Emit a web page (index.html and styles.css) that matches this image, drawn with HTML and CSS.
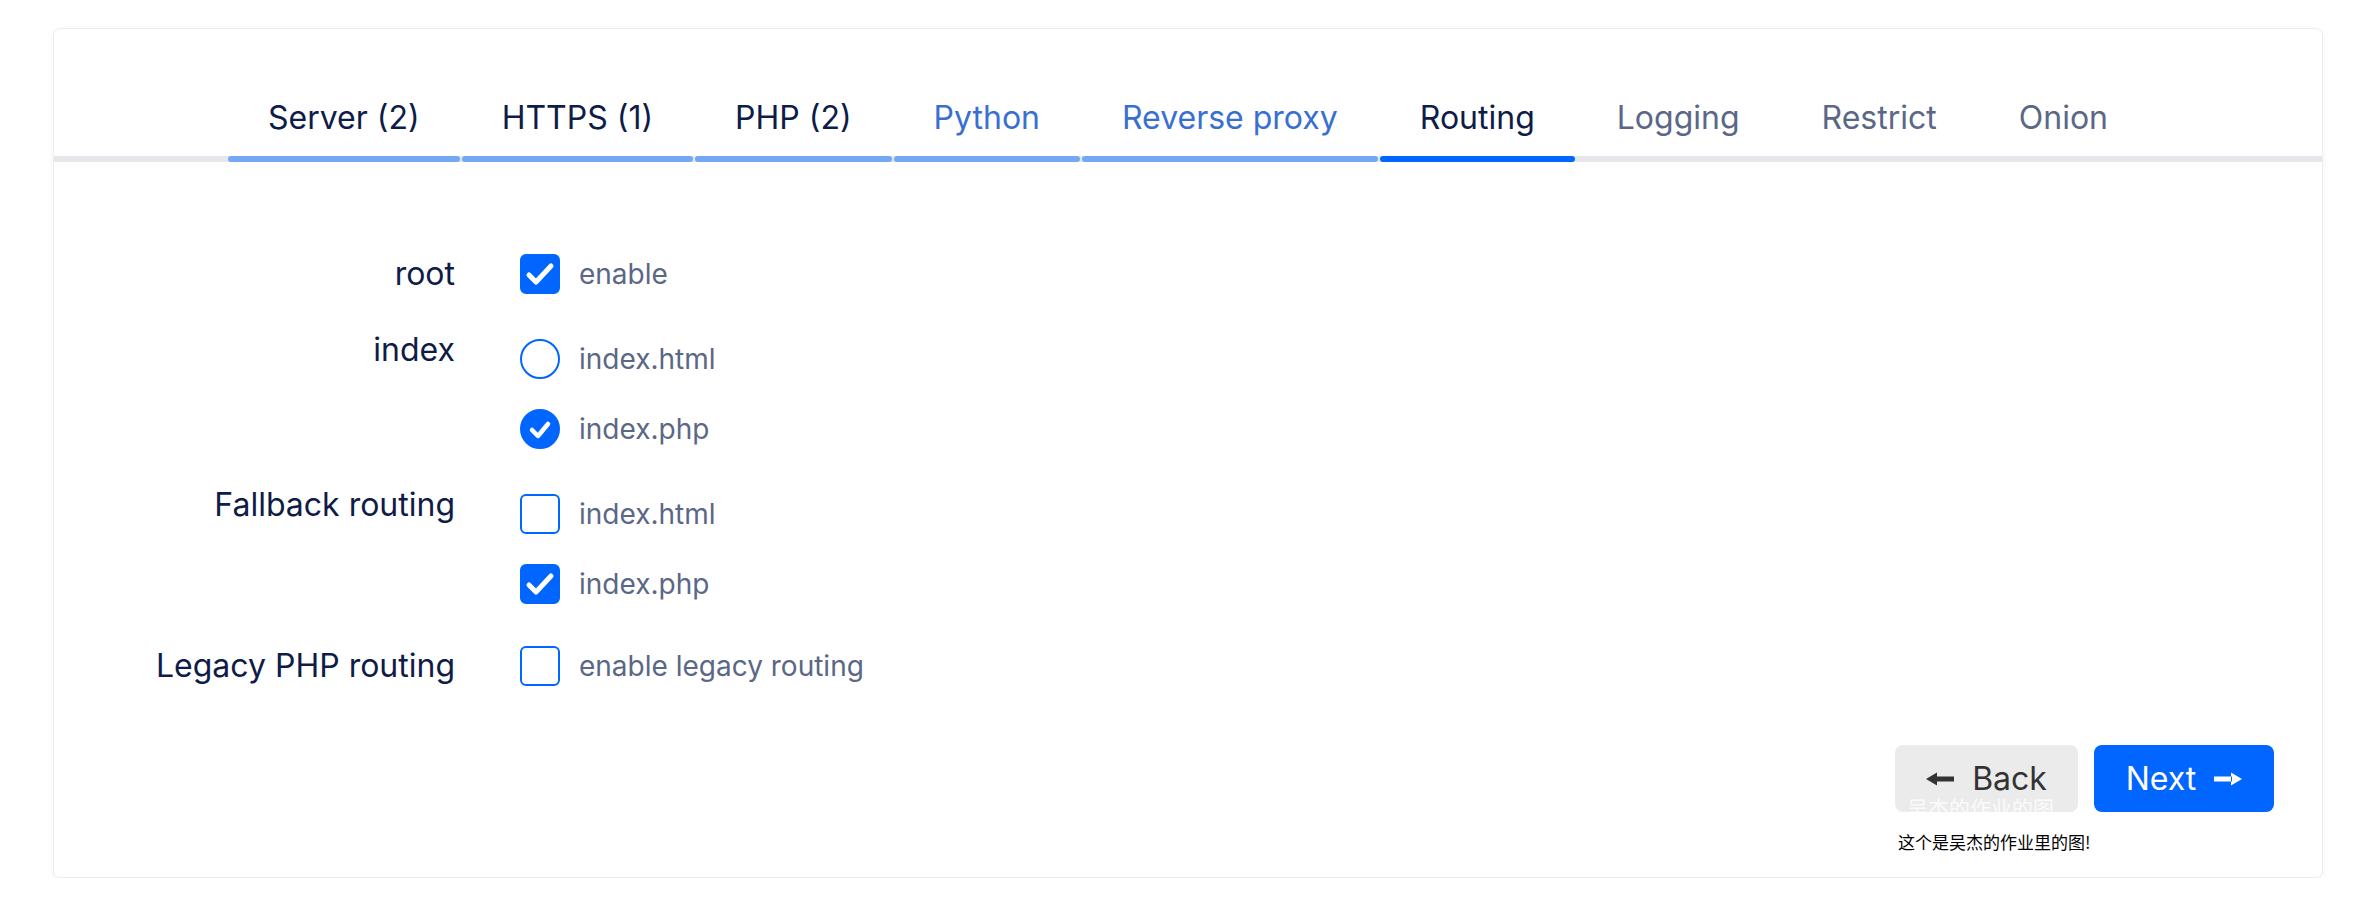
FILE: index.html
```html
<!DOCTYPE html>
<html lang="en">
<head>
<meta charset="utf-8">
<title>Routing</title>
<link rel="stylesheet" href="styles.css">
</head>
<body>
<div class="page">
  <div class="card">
    <nav class="steps">
      <div class="step done">Server (2)</div>
      <div class="step done">HTTPS (1)</div>
      <div class="step done">PHP (2)</div>
      <div class="step link">Python</div>
      <div class="step link">Reverse proxy</div>
      <div class="step active">Routing</div>
      <div class="step todo">Logging</div>
      <div class="step todo">Restrict</div>
      <div class="step todo">Onion</div>
    </nav>

    <div class="form">
      <div class="row">
        <div class="label">root</div>
        <div class="opts">
          <div class="opt">
            <span class="box checked"><svg viewBox="0 0 40 40"><polyline points="9,21 16,28 31,12"/></svg></span>
            <span class="text">enable</span>
          </div>
        </div>
      </div>

      <div class="row multi">
        <div class="label">index</div>
        <div class="opts">
          <div class="opt">
            <span class="radio"></span>
            <span class="text">index.html</span>
          </div>
          <div class="opt">
            <span class="radio checked"><svg viewBox="0 0 40 40"><polyline points="12,21 18,27 28,15"/></svg></span>
            <span class="text">index.php</span>
          </div>
        </div>
      </div>

      <div class="row multi">
        <div class="label">Fallback routing</div>
        <div class="opts">
          <div class="opt">
            <span class="box"></span>
            <span class="text">index.html</span>
          </div>
          <div class="opt">
            <span class="box checked"><svg viewBox="0 0 40 40"><polyline points="9,21 16,28 31,12"/></svg></span>
            <span class="text">index.php</span>
          </div>
        </div>
      </div>

      <div class="row">
        <div class="label">Legacy PHP routing</div>
        <div class="opts">
          <div class="opt">
            <span class="box"></span>
            <span class="text">enable legacy routing</span>
          </div>
        </div>
      </div>
    </div>

    <div class="footer">
      <div class="actions-wrap">
        <div class="actions">
          <button class="btn btn-back" type="button">
            <svg class="arrow" viewBox="0 0 28 14"><path d="M0 7 L11 0.5 L11 13.5 Z M10 4.5 H28 V9.5 H10 Z"/></svg>
            <span class="btn-label">Back</span>
            <span class="watermark">吴杰的作业的图</span>
          </button>
          <button class="btn btn-next" type="button">
            <span class="btn-label">Next</span>
            <svg class="arrow" viewBox="0 0 28 14"><path d="M28 7 L17 0.5 L17 13.5 Z M0 4.5 H18 V9.5 H0 Z"/></svg>
          </button>
        </div>
        <p class="note">这个是吴杰的作业里的图!</p>
      </div>
    </div>
  </div>
</div>
</body>
</html>
```

FILE: styles.css
```css
html, body {
  margin: 0;
  padding: 0;
  background: #ffffff;
}

body {
  font-family: Inter, "Noto Sans", "Noto Sans CJK SC", sans-serif;
}

.page {
  padding: 28px 42px 0 53px;
}

.card {
  background: #ffffff;
  border: 1px solid #ededed;
  border-radius: 7px;
  box-shadow: 0 3px 8px rgba(0, 0, 0, 0.05);
}

/* ---------- steps ---------- */
.steps {
  display: flex;
  justify-content: center;
  gap: 2px;
  padding-top: 69px;
  background: linear-gradient(#e5e7eb, #e5e7eb) left bottom / 100% 6px no-repeat;
}

.step {
  position: relative;
  padding: 0 40px 24px;
  font-size: 32px;
  line-height: 40px;
  white-space: nowrap;
  color: #5b6786;
}

.step::after {
  content: "";
  position: absolute;
  left: 0;
  right: 0;
  bottom: 0;
  height: 6px;
  border-radius: 3px;
  background: transparent;
}

.step.done {
  color: #0e1c47;
}

.step.done::after,
.step.link::after {
  background: #74a8f5;
}

.step.link {
  color: #3a6fd2;
}

.step.active {
  color: #0e1c47;
}

.step.active::after {
  background: #0066ff;
}

/* ---------- form ---------- */
.form {
  padding-top: 92px;
  display: flex;
  flex-direction: column;
  gap: 36px;
}

.row {
  display: grid;
  grid-template-columns: 401px 1fr;
  column-gap: 65px;
  align-items: start;
}

.row.multi + .row {
  margin-top: 6px;
}

.row.multi + .row.multi {
  margin-top: 0;
}

.label {
  text-align: right;
  font-size: 32px;
  line-height: 40px;
  color: #0e1c47;
}

.opts {
  display: flex;
  flex-direction: column;
  gap: 30px;
}

.row.multi .opts {
  padding-top: 9px;
}

.opt {
  display: flex;
  align-items: center;
  gap: 19px;
  height: 40px;
}

.text {
  font-size: 28px;
  line-height: 40px;
  color: #5b6786;
}

.box,
.radio {
  box-sizing: border-box;
  width: 40px;
  height: 40px;
  flex: none;
  border: 2px solid #0066ff;
  background: #ffffff;
  display: flex;
  align-items: center;
  justify-content: center;
}

.box {
  border-radius: 6px;
}

.radio {
  border-radius: 50%;
}

.box.checked,
.radio.checked {
  background: #0066ff;
}

.box svg,
.radio svg {
  width: 40px;
  height: 40px;
  flex: none;
  margin: -2px;
}

.box svg polyline,
.radio svg polyline {
  fill: none;
  stroke: #ffffff;
  stroke-width: 5;
  stroke-linecap: round;
  stroke-linejoin: round;
}

.radio svg polyline {
  stroke-width: 4.5;
}

/* ---------- footer ---------- */
.footer {
  display: flex;
  justify-content: flex-end;
  padding: 59px 48px 24px 0;
}

.actions {
  display: flex;
  gap: 16px;
}

.btn {
  position: relative;
  display: flex;
  align-items: center;
  justify-content: center;
  gap: 18px;
  height: 67px;
  padding: 0 32px;
  border: none;
  border-radius: 8px;
  font-family: Inter, "Noto Sans", sans-serif;
  font-size: 32px;
  cursor: pointer;
}

.btn-label {
  line-height: 36px;
}

.btn-back {
  width: 183px;
  background: #ebebeb;
  color: #333333;
}

.btn-next {
  width: 180px;
  background: #0066ff;
  color: #ffffff;
}

.arrow {
  width: 28px;
  height: 14px;
  flex: none;
}

.btn-back .arrow path {
  fill: #333333;
}

.btn-next .arrow path {
  fill: #ffffff;
}

.watermark {
  position: absolute;
  left: 12px;
  top: 52px;
  font-family: "Noto Sans CJK SC", sans-serif;
  font-size: 21px;
  line-height: 21px;
  white-space: nowrap;
  color: rgba(255, 255, 255, 0.8);
  pointer-events: none;
}

.note {
  margin: 18px 0 0 3px;
  font-family: "Noto Sans CJK SC", sans-serif;
  font-size: 17px;
  line-height: 23px;
  color: #000000;
}
```
